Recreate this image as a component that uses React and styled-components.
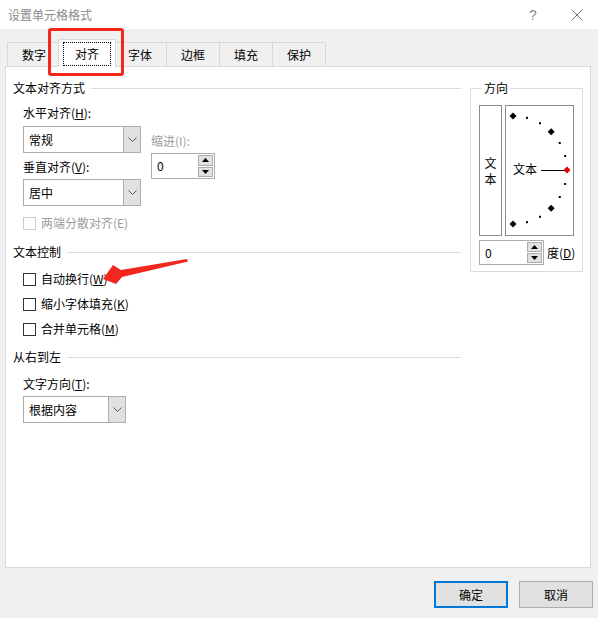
import React from 'react'
import styled, { createGlobalStyle } from 'styled-components'

const GlobalStyle = createGlobalStyle`
  html, body {
    margin:0;
    padding:0;
    background:#f0f0f0;
  }
  body {
    font-family:"Noto Sans CJK SC", "Microsoft YaHei", sans-serif;
    font-size:12px;
    color:#000;
  }
  *{
    box-sizing:border-box;
  }
`

const tabs = ['数字', '对齐', '字体', '边框', '填充', '保护']

function Chevron() {
  return (
    <svg width="9" height="5" viewBox="0 0 9 5">
      <polyline points="0.5,0.5 4.5,4.5 8.5,0.5" fill="none" stroke="#555" strokeWidth="1" />
    </svg>
  )
}

function Triangle({ up }) {
  return (
    <svg width="7" height="4" viewBox="0 0 7 4">
      <polygon points={up ? '3.5,0 7,4 0,4' : '0,0 7,0 3.5,4'} fill="#000" />
    </svg>
  )
}

function Select({ value, width }) {
  return (
    <SelectBox $width={width}>
      <span className='value'>{value}</span>
      <DropButton>
        <Chevron />
      </DropButton>
    </SelectBox>
  )
}

function Spin({ value, width, height }) {
  return (
    <SpinBox $width={width} $height={height}>
      <span className='value'>{value}</span>
      <SpinButtons>
        <SpinButton><Triangle up /></SpinButton>
        <SpinButton><Triangle /></SpinButton>
      </SpinButtons>
    </SpinBox>
  )
}

function Checkbox({ label, disabled, top }) {
  return (
    <CheckRow $top={top} $disabled={disabled}>
      <span className='box' />
      <span>{label}</span>
    </CheckRow>
  )
}

function Dial() {
  const cx = 7
  const cy = 64
  const r = 54
  const marks = []
  for (let i = 0; i <= 12; i++) {
    const a = ((-90 + 15 * i) * Math.PI) / 180
    const x = cx + r * Math.cos(a)
    const y = cy + r * Math.sin(a)
    if (i % 3 === 0) {
      const d = 3.5
      marks.push(
        <polygon
          key={i}
          points={`${x},${y - d} ${x + d},${y} ${x},${y + d} ${x - d},${y}`}
          fill={i === 6 ? '#e00000' : '#000'}
        />
      )
    } else {
      marks.push(<rect key={i} x={x - 1} y={y - 1} width="2" height="2" fill="#000" />)
    }
  }
  return (
    <DialBox>
      <svg width="67" height="129" viewBox="0 0 67 129">
        <text x="7" y="68" fontSize="12" fontFamily='"Noto Sans CJK SC", sans-serif' fill="#000">文本</text>
        <line x1="35" y1="64.5" x2="59" y2="64.5" stroke="#000" strokeWidth="1" />
        {marks}
      </svg>
    </DialBox>
  )
}

function App() {
  return (
    <Window>
      <GlobalStyle />
      <TitleBar>
        <Title>设置单元格格式</Title>
        <TitleButton $width={46}>?</TitleButton>
        <TitleButton $width={42}>
          <svg width="12" height="12" viewBox="0 0 12 12">
            <path d="M0.5 0.5 L11.5 11.5 M11.5 0.5 L0.5 11.5" stroke="#777" strokeWidth="1" />
          </svg>
        </TitleButton>
      </TitleBar>

      <Body>
        <TabStrip>
          {tabs.map((t) =>
            t === '对齐' ? (
              <ActiveTab key={t}>
                <FocusRing>{t}</FocusRing>
              </ActiveTab>
            ) : (
              <Tab key={t}>{t}</Tab>
            )
          )}
        </TabStrip>

        <Panel>
          <LeftCol>
            <SectionHeader>
              <span>文本对齐方式</span>
              <i />
            </SectionHeader>
            <Indent>
              <AlignGrid>
                <div>
                  <Label $top={9}>水平对齐(<u>H</u>):</Label>
                  <Spacer $h={5} />
                  <Select value="常规" width={118} />
                  <Label $top={6}>垂直对齐(<u>V</u>):</Label>
                  <Spacer $h={4} />
                  <Select value="居中" width={118} />
                </div>
                <div>
                  <Label $top={37} $disabled>缩进(I):</Label>
                  <Spacer $h={4} />
                  <Spin value="0" width={64} height={26} />
                </div>
              </AlignGrid>
              <Checkbox top={9} disabled label="两端分散对齐(E)" />
            </Indent>

            <SectionHeader $top={13}>
              <span>文本控制</span>
              <i />
            </SectionHeader>
            <Indent>
              <Checkbox top={11} label={<>自动换行(<u>W</u>)</>} />
              <Checkbox top={9} label={<>缩小字体填充(<u>K</u>)</>} />
              <Checkbox top={9} label={<>合并单元格(<u>M</u>)</>} />
            </Indent>

            <SectionHeader $top={12}>
              <span>从右到左</span>
              <i />
            </SectionHeader>
            <Indent>
              <Label $top={11}>文字方向(<u>T</u>):</Label>
              <Spacer $h={4} />
              <Select value="根据内容" width={103} />
            </Indent>
          </LeftCol>

          <Group>
            <legend>方向</legend>
            <DialRow>
              <VerticalText>
                <span>文</span>
                <span>本</span>
              </VerticalText>
              <Dial />
            </DialRow>
            <DegreeRow>
              <Spin value="0" width={65} height={25} />
              <span className='unit'>度(<u>D</u>)</span>
            </DegreeRow>
          </Group>
        </Panel>
      </Body>

      <Footer>
        <Button $primary>确定</Button>
        <Button>取消</Button>
      </Footer>

      <Highlight />
      <Arrow width="92" height="35" viewBox="100 255 92 35">
        <polygon points="103,279 113,265 121,270 187,259 188,261.5 122,277 116,284" fill="#f2261d" />
      </Arrow>
    </Window>
  )
}

export default App

const Window = styled.div`
    position:relative;
    width:598px;
    height:618px;
    background:#f0f0f0;
    overflow:hidden;
`

const TitleBar = styled.div`
    height:29px;
    background:#fff;
    display:flex;
    align-items:center;
`

const Title = styled.div`
    flex:1;
    padding-left:8px;
    color:#8a8a8a;
    line-height:16px;
`

const TitleButton = styled.div`
    width:${p => p.$width}px;
    height:29px;
    display:flex;
    align-items:center;
    justify-content:center;
    color:#8a8a8a;
    font-size:14px;
    font-family:"Liberation Sans", sans-serif;
`

const Body = styled.div`
    padding:10px 7px 0 5px;
`

const TabStrip = styled.div`
    display:flex;
    align-items:flex-end;
    height:27px;
    padding-left:2px;
`

const Tab = styled.div`
    width:54px;
    height:24px;
    margin-left:-1px;
    border:1px solid #d9d9d9;
    border-bottom:none;
    display:flex;
    align-items:center;
    justify-content:center;
    line-height:16px;
    &:first-child{
        margin-left:0;
    }
`

const ActiveTab = styled.div`
    position:relative;
    z-index:1;
    width:58px;
    height:28px;
    margin:0 -2px -1px -3px;
    background:#fff;
    border:1px solid #d9d9d9;
    border-bottom:none;
    display:flex;
    justify-content:center;
    align-items:flex-start;
    padding-top:2px;
`

const FocusRing = styled.span`
    display:block;
    border:1px dotted #000;
    padding:3px 11px;
    line-height:16px;
`

const Panel = styled.div`
    height:502px;
    background:#fff;
    border:1px solid #d9d9d9;
    display:flex;
    align-items:flex-start;
    padding:13px 0 0 7px;
`

const LeftCol = styled.div`
    width:448px;
`

const SectionHeader = styled.div`
    display:flex;
    align-items:center;
    height:16px;
    line-height:16px;
    margin-top:${p => p.$top || 0}px;
    i{
        flex:1;
        height:1px;
        margin-left:6px;
        background:#dcdcdc;
    }
`

const Indent = styled.div`
    padding-left:10px;
`

const AlignGrid = styled.div`
    display:grid;
    grid-template-columns:118px auto;
    column-gap:10px;
`

const Label = styled.div`
    height:16px;
    line-height:16px;
    margin-top:${p => p.$top || 0}px;
    color:${p => (p.$disabled ? '#9c9c9c' : '#000')};
`

const Spacer = styled.div`
    height:${p => p.$h}px;
`

const SelectBox = styled.div`
    width:${p => p.$width}px;
    height:27px;
    display:flex;
    border:1px solid #adadad;
    background:#fff;
    .value{
        flex:1;
        padding-left:5px;
        line-height:25px;
    }
`

const DropButton = styled.div`
    width:17px;
    background:#e1e1e1;
    border-left:1px solid #adadad;
    display:flex;
    align-items:center;
    justify-content:center;
`

const SpinBox = styled.div`
    flex:none;
    width:${p => p.$width}px;
    height:${p => p.$height}px;
    display:flex;
    border:1px solid #adadad;
    background:#fff;
    .value{
        flex:1;
        padding-left:5px;
        line-height:${p => p.$height - 2}px;
    }
`

const SpinButtons = styled.div`
    width:16px;
    padding:1px 1px 1px 0;
    display:flex;
    flex-direction:column;
    gap:1px;
`

const SpinButton = styled.div`
    flex:1;
    background:#e1e1e1;
    border:1px solid #adadad;
    display:flex;
    align-items:center;
    justify-content:center;
`

const CheckRow = styled.div`
    display:flex;
    align-items:center;
    height:16px;
    line-height:16px;
    margin-top:${p => p.$top || 0}px;
    color:${p => (p.$disabled ? '#9c9c9c' : '#000')};
    .box{
        width:13px;
        height:13px;
        margin-right:5px;
        background:#fff;
        border:1px solid ${p => (p.$disabled ? '#cccccc' : '#333333')};
    }
`

const Group = styled.fieldset`
    width:113px;
    margin:0 0 0 9px;
    padding:9px 8px 6px 8px;
    border:1px solid #dcdcdc;
    min-width:0;
    legend{
        padding:0 2px;
        margin-left:3px;
        line-height:16px;
    }
`

const DialRow = styled.div`
    display:flex;
    gap:3px;
`

const VerticalText = styled.div`
    width:24px;
    height:131px;
    border:1px solid #8c8c8c;
    display:flex;
    flex-direction:column;
    align-items:center;
    justify-content:center;
    line-height:16px;
`

const DialBox = styled.div`
    width:69px;
    height:131px;
    border:1px solid #8c8c8c;
    svg{
        display:block;
    }
`

const DegreeRow = styled.div`
    display:flex;
    align-items:center;
    gap:3px;
    margin-top:4px;
    .unit{
        white-space:nowrap;
        line-height:16px;
    }
`

const Footer = styled.div`
    display:flex;
    justify-content:flex-end;
    gap:11px;
    padding:13px 5px 0 0;
`

const Button = styled.div`
    width:74px;
    height:27px;
    display:flex;
    align-items:center;
    justify-content:center;
    background:#e1e1e1;
    border:${p => (p.$primary ? '2px solid #0078d7' : '1px solid #adadad')};
`

const Highlight = styled.div`
    position:absolute;
    left:48px;
    top:28px;
    width:76px;
    height:48px;
    border:3px solid #f2261d;
    border-radius:3px;
    pointer-events:none;
`

const Arrow = styled.svg`
    position:absolute;
    left:100px;
    top:255px;
    pointer-events:none;
`
